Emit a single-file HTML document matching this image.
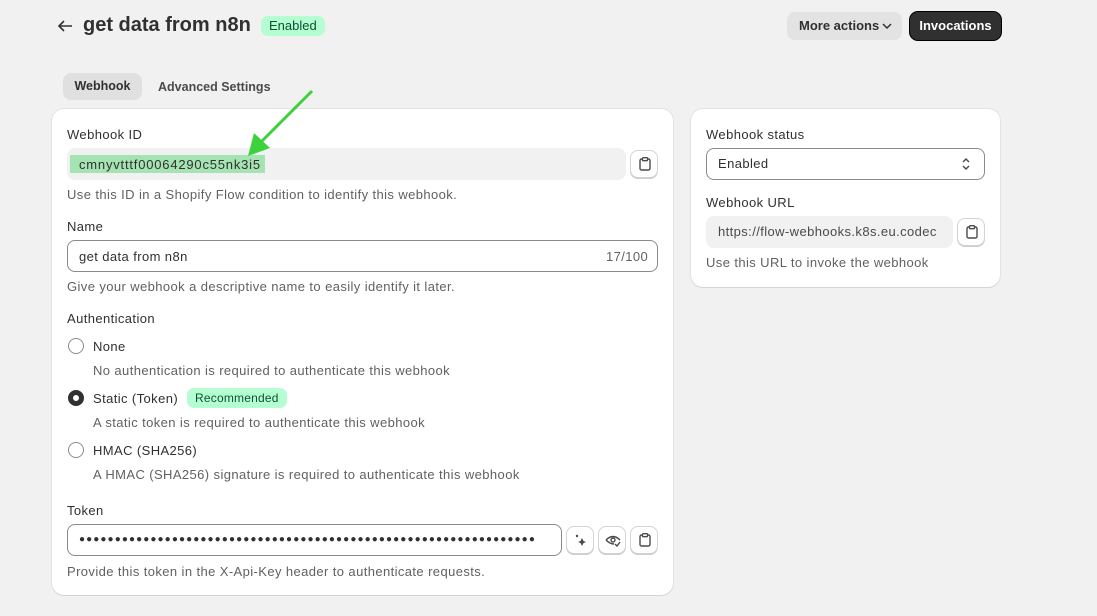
<!DOCTYPE html>
<html><head><style>
*{box-sizing:border-box;margin:0;padding:0}
body{width:1097px;height:616px;background:#f1f1f1;font-family:"Liberation Sans",sans-serif;font-size:13px;color:#303030;position:relative;overflow:hidden;letter-spacing:0.4px}
.a{position:absolute}
.card{position:absolute;background:#fff;border-radius:12px;box-shadow:0 1px 0 #d4d4d4,0 0 0 1px #e3e3e3}
.lbl{position:absolute;font-size:13px;color:#303030}
.help{position:absolute;font-size:13px;color:#616161}
.btn{position:absolute;width:28px;height:28px;border:1px solid #d4d4d4;border-radius:8px;background:#fff;box-shadow:0 1px 0 #ccc}
.radio{position:absolute;width:16px;height:16px;border:1.5px solid #8a8a8a;border-radius:50%}
.clip{position:absolute;left:8px;top:6px}
</style></head><body>
<svg class="a" style="left:57px;top:19px" width="16" height="14"><path d="M15 7 H2 M7 2 L2 7 L7 12" fill="none" stroke="#303030" stroke-width="1.6"/></svg>
<div class="a" style="left:83px;top:14px;font-size:20px;font-weight:bold;color:#303030;letter-spacing:0">get data from n8n</div>
<div class="a" style="left:261px;top:16px;height:20px;padding:0 8px;line-height:20px;background:#b4fed2;border-radius:7px;font-size:13px;color:#0c5132;letter-spacing:0">Enabled</div>
<div class="a" style="left:787px;top:12px;width:115px;height:28px;background:#e3e3e3;border-radius:8px;font-size:13px;font-weight:bold;line-height:28px;padding-left:12px;letter-spacing:0">More actions<svg style="position:absolute;left:95px;top:11px" width="10" height="7"><path d="M1 1 L5 5 L9 1" fill="none" stroke="#303030" stroke-width="1.5"/></svg></div>
<div class="a" style="left:910px;top:12px;width:91px;height:28px;background:#303030;border-radius:8px;color:#fff;font-size:13px;font-weight:bold;line-height:28px;text-align:center;box-shadow:0 0 0 1px #000;letter-spacing:0">Invocations</div>
<div class="a" style="left:63px;top:73px;width:79px;height:27px;background:#e0e0e0;border-radius:8px;font-weight:bold;line-height:27px;text-align:center;color:#303030;font-size:12.5px;letter-spacing:0">Webhook</div>
<div class="a" style="left:158px;top:80px;font-weight:bold;color:#4a4a4a;font-size:12.5px;letter-spacing:0">Advanced Settings</div>
<div class="card" style="left:52px;top:109px;width:621px;height:486px"></div>
<div class="lbl" style="left:67px;top:127px">Webhook ID</div>
<div class="a" style="left:67px;top:148px;width:559px;height:32px;background:#f1f1f1;border-radius:8px"></div>
<div class="a" style="left:70px;top:155px;width:195px;height:18px;background:#a6e3b2"></div>
<div class="a" style="left:79px;top:157px;color:#303030;letter-spacing:0.8px">cmnyvtttf00064290c55nk3i5</div>
<div class="btn" style="left:630px;top:150px"><svg class="clip" width="12" height="14" viewBox="0 0 12 14"><rect x="1" y="2" width="10" height="11" rx="1.5" fill="none" stroke="#4a4a4a" stroke-width="1.4"/><rect x="3.5" y="0.7" width="5" height="3" rx=".8" fill="#fff" stroke="#4a4a4a" stroke-width="1.3"/></svg></div>
<svg class="a" style="left:240px;top:88px" width="80" height="70"><line x1="72" y1="3" x2="18" y2="57" stroke="#3dd13d" stroke-width="3"/><polygon points="8,68 14,45 30,60" fill="#3dd13d"/></svg>
<div class="help" style="left:67px;top:187px">Use this ID in a Shopify Flow condition to identify this webhook.</div>
<div class="lbl" style="left:67px;top:219px">Name</div>
<div class="a" style="left:67px;top:240px;width:591px;height:32px;border:1px solid #8a8a8a;border-radius:8px"></div>
<div class="a" style="left:79px;top:249px">get data from n8n</div>
<div class="a" style="left:606px;top:249px;color:#616161">17/100</div>
<div class="help" style="left:67px;top:279px">Give your webhook a descriptive name to easily identify it later.</div>
<div class="lbl" style="left:67px;top:311px">Authentication</div>
<div class="radio" style="left:68px;top:338px"></div>
<div class="lbl" style="left:93px;top:339px">None</div>
<div class="help" style="left:93px;top:363px">No authentication is required to authenticate this webhook</div>
<div class="radio" style="left:68px;top:390px;border:5px solid #303030"></div>
<div class="lbl" style="left:93px;top:391px">Static (Token)</div>
<div class="a" style="left:187px;top:388px;height:20px;padding:0 8px;line-height:20px;background:#b4fed2;border-radius:7px;font-size:12px;color:#0c5132;letter-spacing:0.2px">Recommended</div>
<div class="help" style="left:93px;top:415px">A static token is required to authenticate this webhook</div>
<div class="radio" style="left:68px;top:442px"></div>
<div class="lbl" style="left:93px;top:443px">HMAC (SHA256)</div>
<div class="help" style="left:93px;top:467px">A HMAC (SHA256) signature is required to authenticate this webhook</div>
<div class="lbl" style="left:67px;top:503px">Token</div>
<div class="a" style="left:67px;top:524px;width:495px;height:32px;border:1px solid #8a8a8a;border-radius:8px;padding-left:11px;line-height:30px;font-size:10px;letter-spacing:1.1px;overflow:hidden;white-space:nowrap">●●●●●●●●●●●●●●●●●●●●●●●●●●●●●●●●●●●●●●●●●●●●●●●●●●●●●●●●●●●●●●●●</div>
<div class="btn" style="left:566px;top:526px"><svg class="clip" width="12" height="14"><circle cx="2" cy="3" r="1.2" fill="#4a4a4a"/><path d="M7 5 L8.5 8 L11 9 L8.5 10 L7 13 L5.5 10 L3 9 L5.5 8Z" fill="#4a4a4a"/></svg></div>
<div class="btn" style="left:598px;top:526px"><svg class="a" style="left:6px;top:7px" width="16" height="13"><path d="M1 6 Q8 -1 15 6" fill="none" stroke="#4a4a4a" stroke-width="1.4"/><path d="M1 6 Q5 10 9 10" fill="none" stroke="#4a4a4a" stroke-width="1.4"/><circle cx="8" cy="6" r="2" fill="none" stroke="#4a4a4a" stroke-width="1.4"/><path d="M10 10 L12 12 L15 8" fill="none" stroke="#4a4a4a" stroke-width="1.4"/></svg></div>
<div class="btn" style="left:630px;top:526px"><svg class="clip" width="12" height="14" viewBox="0 0 12 14"><rect x="1" y="2" width="10" height="11" rx="1.5" fill="none" stroke="#4a4a4a" stroke-width="1.4"/><rect x="3.5" y="0.7" width="5" height="3" rx=".8" fill="#fff" stroke="#4a4a4a" stroke-width="1.3"/></svg></div>
<div class="help" style="left:67px;top:564px">Provide this token in the X-Api-Key header to authenticate requests.</div>
<div class="card" style="left:691px;top:109px;width:309px;height:178px"></div>
<div class="lbl" style="left:706px;top:127px">Webhook status</div>
<div class="a" style="left:706px;top:148px;width:279px;height:32px;border:1px solid #8a8a8a;border-radius:8px;padding-left:11px;line-height:30px">Enabled</div>
<svg class="a" style="left:961px;top:157px" width="10" height="14"><path d="M2 5 L5 2 L8 5 M2 9 L5 12 L8 9" fill="none" stroke="#4a4a4a" stroke-width="1.4"/></svg>
<div class="lbl" style="left:706px;top:195px">Webhook URL</div>
<div class="a" style="left:706px;top:216px;width:247px;height:32px;background:#f1f1f1;border-radius:8px;padding-left:12px;line-height:32px;color:#4a4a4a;overflow:hidden;white-space:nowrap">https://flow-webhooks.k8s.eu.codec</div>
<div class="btn" style="left:957px;top:218px"><svg class="clip" width="12" height="14" viewBox="0 0 12 14"><rect x="1" y="2" width="10" height="11" rx="1.5" fill="none" stroke="#4a4a4a" stroke-width="1.4"/><rect x="3.5" y="0.7" width="5" height="3" rx=".8" fill="#fff" stroke="#4a4a4a" stroke-width="1.3"/></svg></div>
<div class="help" style="left:706px;top:255px">Use this URL to invoke the webhook</div>
</body></html>
